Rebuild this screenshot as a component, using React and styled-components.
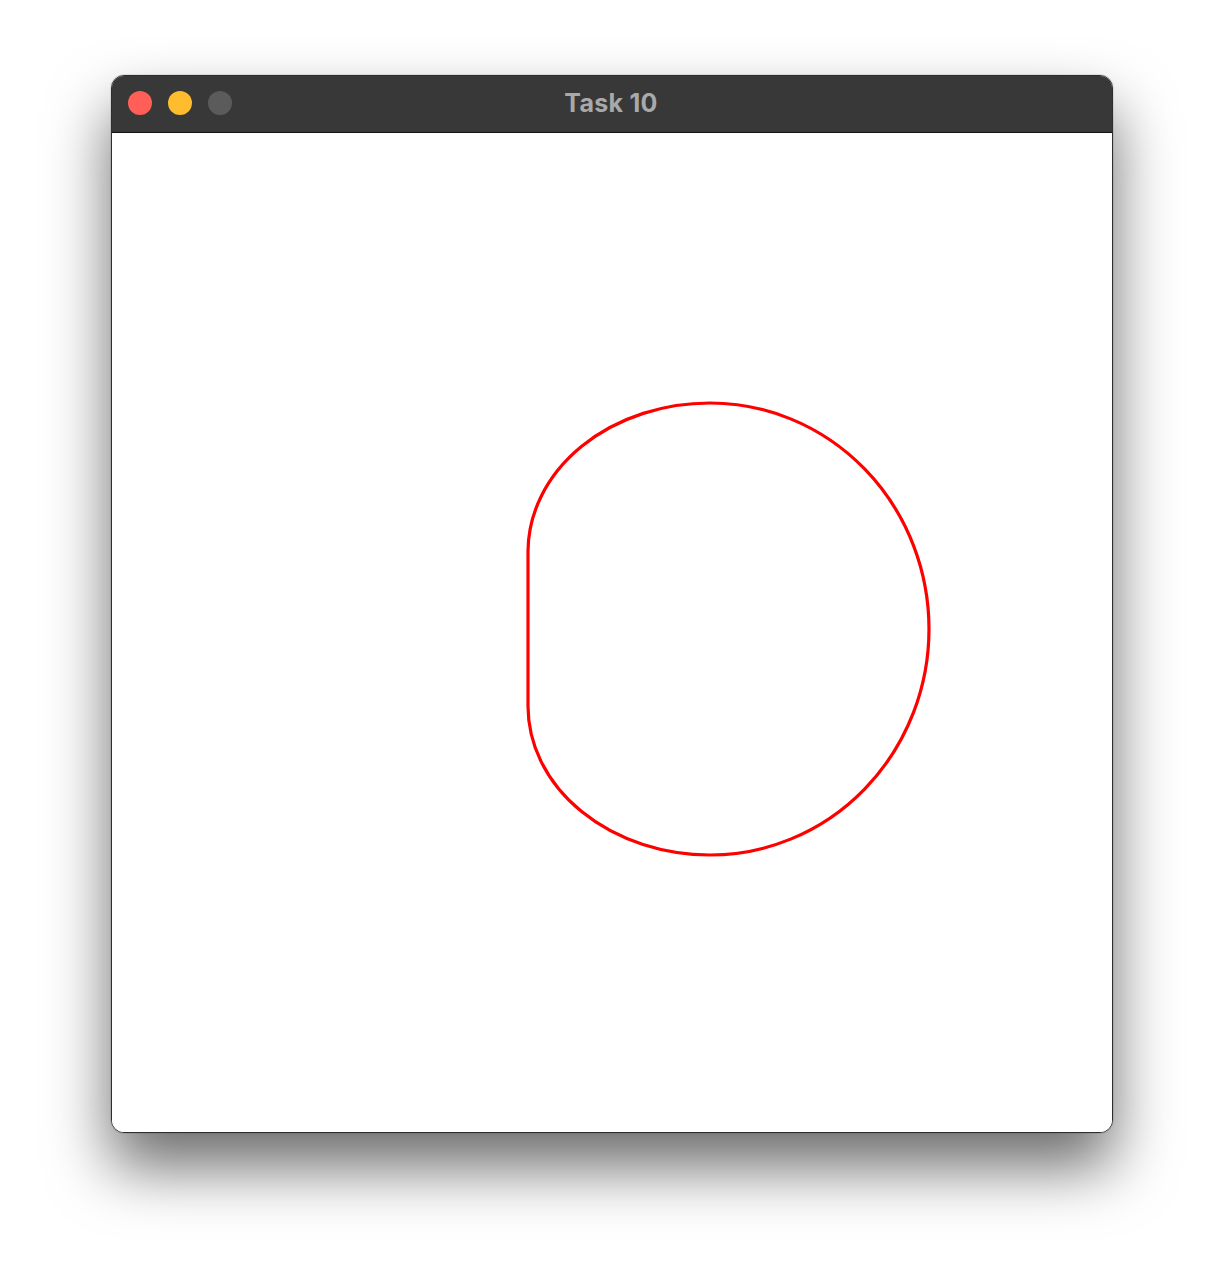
import styled, { createGlobalStyle } from "styled-components"

const GlobalStyle = createGlobalStyle`
    html, body {
        margin: 0;
        padding: 0;
        background: #ffffff;
    }
    body {
        font-family: Inter, "Noto Sans", "Liberation Sans", sans-serif;
    }
`

const Page = styled.div`
    width: 1224px;
    height: 1280px;
    padding: 75px 0 0 111px;
    box-sizing: border-box;
    overflow: hidden;
`

const Window = styled.div`
    width: 1002px;
    box-sizing: border-box;
    border: 1px solid #2e2e2e;
    border-radius: 13px;
    overflow: hidden;
    background: #ffffff;
    box-shadow: 0 34px 62px rgba(0, 0, 0, 0.58), 0 0 0 1px rgba(0, 0, 0, 0.08);
    display: flex;
    flex-direction: column;
`

const TitleBar = styled.div`
    position: relative;
    height: 57px;
    background: #383838;
    border-bottom: 1px solid #111111;
    box-sizing: border-box;
    display: flex;
    align-items: center;
    justify-content: center;
`

const Lights = styled.div`
    position: absolute;
    left: 16px;
    top: 15px;
    display: flex;
    gap: 16px;
`

const Light = styled.span`
    width: 24px;
    height: 24px;
    border-radius: 50%;
    background: ${p => p.color};
`

const Title = styled.div`
    color: #a9a9a9;
    font-size: 25px;
    font-weight: 700;
    letter-spacing: 0.3px;
    margin-top: -2px;
    margin-right: 2px;
`

const Canvas = styled.div`
    width: 1000px;
    height: 999px;
    background: #ffffff;

    & svg {
        display: block;
    }
`

const blobPath =
    "M710,404 A219,226 0 0 1 929,630 A219,226 0 0 1 710,856 " +
    "A182,149 0 0 1 528,707 L528,552 A182,149 0 0 1 710,404 Z"

export default function App() {
    return (
        <>
            <GlobalStyle />
            <Page>
                <Window>
                    <TitleBar>
                        <Lights>
                            <Light color='#ff5f57' />
                            <Light color='#febc2e' />
                            <Light color='#5b5b5b' />
                        </Lights>
                        <Title>Task 10</Title>
                    </TitleBar>
                    <Canvas>
                        <svg width='1000' height='999' viewBox='112 134 1000 999'>
                            <path d={blobPath} fill='none' stroke='#ff0000' strokeWidth='3.2' />
                        </svg>
                    </Canvas>
                </Window>
            </Page>
        </>
    )
}
